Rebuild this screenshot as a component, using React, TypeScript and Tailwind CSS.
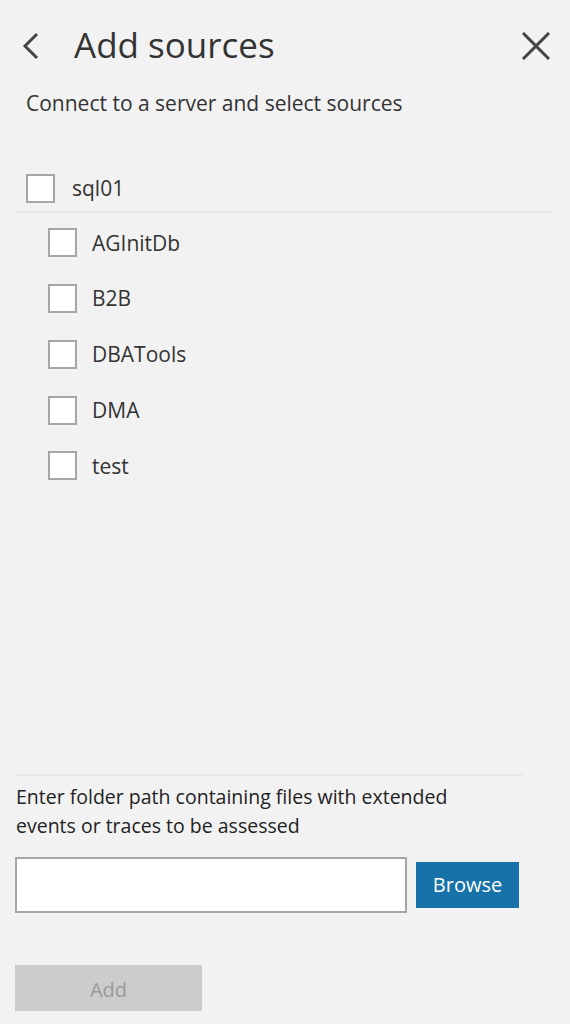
import { useState } from 'react';

const databases = ['AGInitDb', 'B2B', 'DBATools', 'DMA', 'test'];

function Box({ checked, onChange }: { checked: boolean; onChange: () => void }) {
  return (
    <button
      type="button"
      onClick={onChange}
      className="w-[29px] h-[29px] shrink-0 border-2 border-[#a6a6a6] bg-white flex items-center justify-center"
    >
      {checked && (
        <svg width="18" height="18" viewBox="0 0 18 18">
          <path d="M3 9.5l4 4 8-9" fill="none" stroke="#333" strokeWidth="2" />
        </svg>
      )}
    </button>
  );
}

export default function App() {
  const [server, setServer] = useState(false);
  const [picked, setPicked] = useState<Record<string, boolean>>({});
  const [path, setPath] = useState('');

  return (
    <div
      className="w-[570px] h-[1024px] bg-[#f2f2f2] text-[#333] flex flex-col overflow-hidden"
      style={{ fontFamily: '"Open Sans", "Noto Sans", sans-serif' }}
    >
      <div className="flex items-center h-[50px] mt-[21px] pl-[22px] pr-[19px]">
        <svg width="18" height="28" viewBox="0 0 18 28" className="shrink-0">
          <path d="M15 2L3 14l12 12" fill="none" stroke="#444" strokeWidth="3" />
        </svg>
        <h1 className="ml-[34px] text-[35px] leading-none text-[#333] -mt-[3px]">Add sources</h1>
        <svg width="30" height="28" viewBox="0 0 30 28" className="ml-auto shrink-0">
          <path d="M2 1l26 26M28 1L2 27" fill="none" stroke="#444" strokeWidth="3" />
        </svg>
      </div>

      <p className="mt-[19px] ml-[26px] text-[21px] leading-[26px] text-[#333]">
        Connect to a server and select sources
      </p>

      <div className="mt-[49px] ml-[16px] mr-[18px]">
        <div className="flex items-center gap-[17px] pl-[10px] h-[48px] border-b-2 border-[#e6e6e6]">
          <Box checked={server} onChange={() => setServer(!server)} />
          <span className="text-[21px] mt-[1px]">sql01</span>
        </div>
        <div className="flex flex-col pl-[32px] pt-[2px]">
          {databases.map((d) => (
            <div key={d} className="flex items-center gap-[15px] h-[55.75px]">
              <Box
                checked={!!picked[d]}
                onChange={() => setPicked({ ...picked, [d]: !picked[d] })}
              />
              <span className="text-[21px] mt-[1px]">{d}</span>
            </div>
          ))}
        </div>
      </div>

      <div className="mt-auto ml-[16px] mr-[48px] border-t-2 border-[#e6e6e6]" />
      <p className="ml-[16px] mt-[6px] w-[470px] text-[19.5px] leading-[29px] text-[#222]">
        Enter folder path containing files with extended events or traces to be assessed
      </p>
      <div className="flex items-center mt-[17px] ml-[15px]">
        <input
          value={path}
          onChange={(e) => setPath(e.target.value)}
          className="w-[392px] h-[56px] bg-white border-2 border-[#a6a6a6] px-2 text-[18px] outline-none"
        />
        <button className="ml-[9px] w-[103px] h-[46px] bg-[#1672a8] text-white text-[20px]">Browse</button>
      </div>
      <button
        disabled
        className="mt-[52px] mb-[13px] ml-[15px] w-[187px] h-[46px] bg-[#cccccc] text-[#999] text-[20px] pt-[3px]"
      >
        Add
      </button>
    </div>
  );
}
